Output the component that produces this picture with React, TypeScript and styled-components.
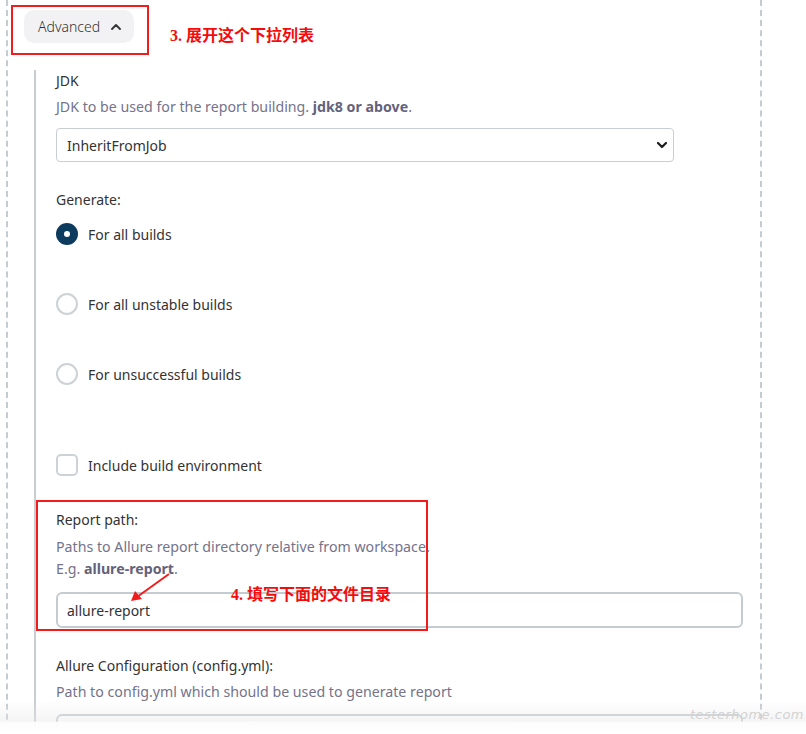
import styled, { createGlobalStyle } from 'styled-components';

const GlobalStyle = createGlobalStyle`
  html, body {
    margin: 0;
    padding: 0;
    background: #fff;
  }
  body {
    font-family: "Noto Sans", "Open Sans", sans-serif;
    color: #333;
  }
`;

const Page = styled.div`
  position: relative;
  width: 806px;
  height: 734px;
  overflow: hidden;
`;

const Frame = styled.div`
  margin-left: 6px;
  width: 756px;
  min-height: 734px;
  box-sizing: border-box;
  border-left: 2px dashed #c4cbd1;
  border-right: 2px dashed #c4cbd1;
  padding: 10px 0 0 16px;
`;

const AdvancedButton = styled.button`
  display: inline-flex;
  align-items: center;
  gap: 11px;
  height: 33px;
  padding: 0 13px 0 14px;
  border: none;
  border-radius: 10px;
  background: #f2f2f4;
  font-family: inherit;
  font-size: 14px;
  font-weight: 300;
  color: #333;
  cursor: pointer;
`;

const Nested = styled.div`
  margin: 27px 0 0 10px;
  padding: 0 0 0 20px;
  border-left: 2px solid #c8cdd2;
  min-height: 700px;
`;

const Label = styled.div<{ $gap?: number }>`
  font-size: 14px;
  line-height: 22px;
  color: #333;
  margin-bottom: ${(p) => p.$gap ?? 4}px;
`;

const Help = styled.div`
  font-size: 14.2px;
  line-height: 22px;
  color: #75738a;

  b {
    font-weight: 700;
    color: #64627a;
  }
`;

const SelectWrap = styled.div`
  position: relative;
  width: 618px;
  margin-top: 10px;
`;

const Select = styled.select`
  appearance: none;
  width: 100%;
  height: 34px;
  padding: 0 30px 0 10px;
  border: 1px solid #c9ced3;
  border-radius: 4px;
  background: #fff;
  font-family: inherit;
  font-size: 14px;
  color: #333;
`;

const SelectArrow = styled.svg`
  position: absolute;
  right: 6px;
  top: 13px;
  pointer-events: none;
`;

const Section = styled.div<{ $top: number }>`
  margin-top: ${(p) => p.$top}px;
`;

const OptionList = styled.div`
  display: flex;
  flex-direction: column;
  gap: 48px;
  margin-top: 12px;
`;

const ChoiceRow = styled.label`
  display: flex;
  align-items: center;
  gap: 10px;
  height: 22px;
  font-size: 14px;
  color: #333;
`;

const Radio = styled.span<{ $checked?: boolean }>`
  width: 22px;
  height: 22px;
  box-sizing: border-box;
  border-radius: 50%;
  border: ${(p) => (p.$checked ? '8px solid #0c3b5d' : '2px solid #ccd2d6')};
  background: #fff;
`;

const Checkbox = styled.span`
  width: 22px;
  height: 22px;
  box-sizing: border-box;
  border: 2px solid #ccd2d6;
  border-radius: 5px;
  background: #fff;
`;

const TextInput = styled.input<{ $top?: number }>`
  display: block;
  width: 687px;
  height: 36px;
  box-sizing: border-box;
  margin-top: ${(p) => p.$top ?? 12}px;
  padding: 0 9px;
  border: 2px solid #c5ccd1;
  border-radius: 6px;
  font-family: inherit;
  font-size: 14px;
  color: #333;
  outline: none;
`;

const RedBox = styled.div<{ $x: number; $y: number; $w: number; $h: number }>`
  position: absolute;
  left: ${(p) => p.$x}px;
  top: ${(p) => p.$y}px;
  width: ${(p) => p.$w}px;
  height: ${(p) => p.$h}px;
  box-sizing: border-box;
  border: 2px solid #f21c1c;
  pointer-events: none;
`;

const Note = styled.div<{ $x: number; $y: number }>`
  position: absolute;
  left: ${(p) => p.$x}px;
  top: ${(p) => p.$y}px;
  font-family: "Liberation Serif", "Noto Sans CJK SC", serif;
  font-weight: 700;
  font-size: 16px;
  line-height: 20px;
  color: #f40b0b;
  white-space: nowrap;
`;

const Arrow = styled.svg`
  position: absolute;
  left: 125px;
  top: 570px;
`;

const BottomFade = styled.div`
  position: absolute;
  left: 0;
  right: 0;
  bottom: 0;
  height: 34px;
  background: linear-gradient(
    to bottom,
    rgba(240, 240, 240, 0) 0%,
    rgba(232, 232, 232, 0.45) 62%,
    rgba(252, 252, 252, 0.97) 66%,
    #fff 100%
  );
  pointer-events: none;
`;

const Watermark = styled.div`
  position: absolute;
  right: 2px;
  bottom: 12px;
  font-family: "DejaVu Sans", sans-serif;
  font-style: italic;
  font-size: 13px;
  letter-spacing: 0.5px;
  color: #d2d2d2;
  pointer-events: none;
`;

export default function App() {
  return (
    <Page>
      <GlobalStyle />
      <Frame>
        <AdvancedButton type="button">
          Advanced
          <svg width="10" height="7" viewBox="0 0 10 7">
            <path d="M1 6 L5 2 L9 6" fill="none" stroke="#333" strokeWidth="1.8" strokeLinecap="round" strokeLinejoin="round" />
          </svg>
        </AdvancedButton>

        <Nested>
          <Label>JDK</Label>
          <Help>
            JDK to be used for the report building. <b>jdk8 or above</b>.
          </Help>
          <SelectWrap>
            <Select defaultValue="InheritFromJob">
              <option>InheritFromJob</option>
            </Select>
            <SelectArrow width="12" height="8" viewBox="0 0 12 8">
              <path d="M2 2 L6 6 L10 2" fill="none" stroke="#1b1b1b" strokeWidth="2.2" strokeLinecap="round" strokeLinejoin="round" />
            </SelectArrow>
          </SelectWrap>

          <Section $top={27}>
            <Label $gap={0}>Generate:</Label>
            <OptionList>
              <ChoiceRow>
                <Radio $checked />
                For all builds
              </ChoiceRow>
              <ChoiceRow>
                <Radio />
                For all unstable builds
              </ChoiceRow>
              <ChoiceRow>
                <Radio />
                For unsuccessful builds
              </ChoiceRow>
            </OptionList>
          </Section>

          <Section $top={69}>
            <ChoiceRow>
              <Checkbox />
              Include build environment
            </ChoiceRow>
          </Section>

          <Section $top={33}>
            <Label $gap={5}>Report path:</Label>
            <Help>Paths to Allure report directory relative from workspace.</Help>
            <Help>
              E.g. <b>allure-report</b>.
            </Help>
            <TextInput defaultValue="allure-report" />
          </Section>

          <Section $top={27}>
            <Label>Allure Configuration (config.yml):</Label>
            <Help>Path to config.yml which should be used to generate report</Help>
            <TextInput defaultValue="" $top={11} />
          </Section>
        </Nested>
      </Frame>

      <RedBox $x={11} $y={5} $w={138} $h={50} />
      <Note $x={170} $y={26}>3. 展开这个下拉列表</Note>

      <RedBox $x={36} $y={500} $w={392} $h={131} />
      <Note $x={231} $y={585}>4. 填写下面的文件目录</Note>
      <Arrow width="50" height="36" viewBox="0 0 50 36">
        <line x1="44" y1="4" x2="12" y2="27" stroke="#f21c1c" strokeWidth="2" />
        <polygon points="6,31 10,21 17,29" fill="#f21c1c" />
      </Arrow>

      <BottomFade />
      <Watermark>testerhome.com</Watermark>
    </Page>
  );
}
